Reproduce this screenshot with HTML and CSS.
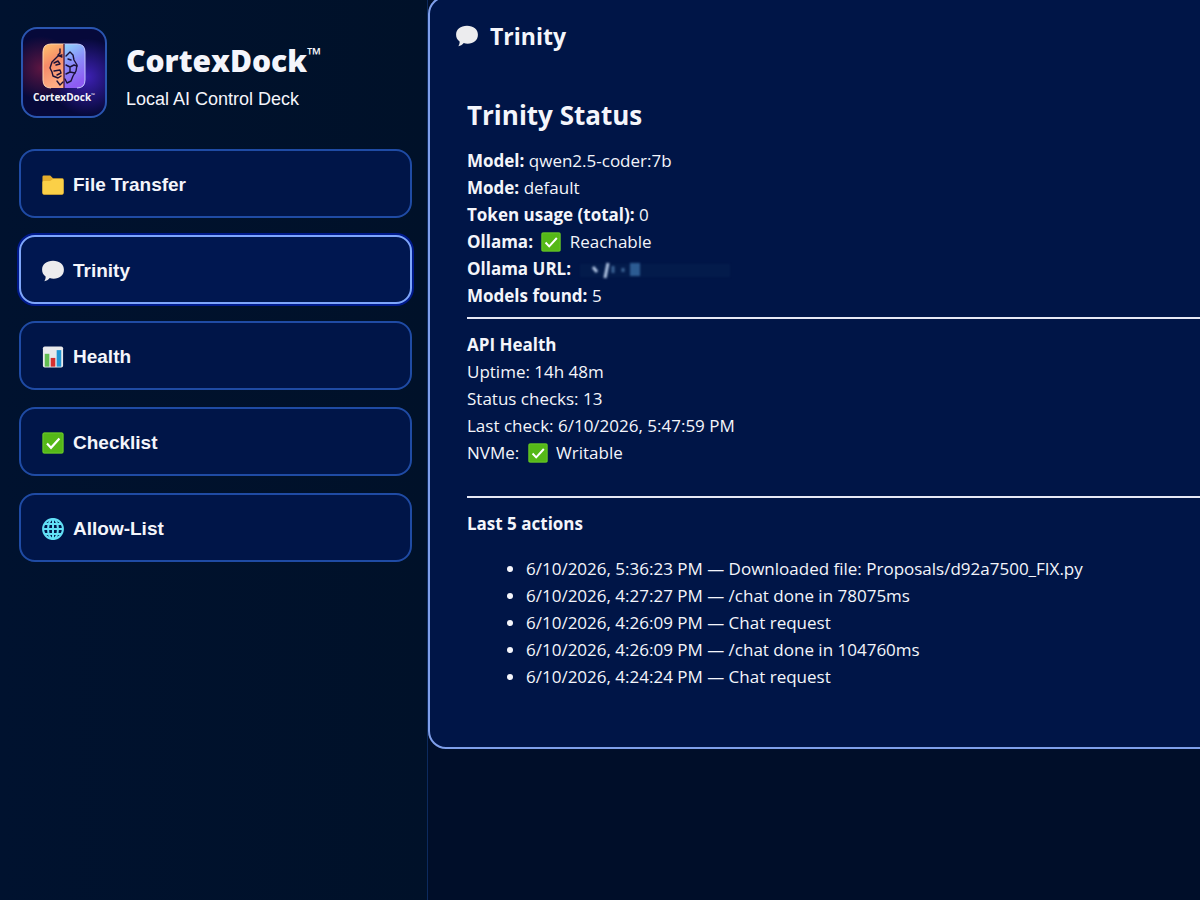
FILE: index.html
```html
<!DOCTYPE html>
<html lang="en">
<head>
  <meta charset="UTF-8">
  <meta name="viewport" content="width=device-width, initial-scale=1.0">
  <title>CortexDock - Trinity</title>
  <link rel="stylesheet" href="styles.css">
</head>
<body>
  <!-- shared icons -->
  <svg class="defs" width="0" height="0" aria-hidden="true">
    <symbol id="icon-check" viewBox="0 0 22 22">
      <rect x="0.5" y="0.5" width="21" height="21" rx="1.5" fill="#55b818"/>
      <rect x="1" y="1" width="20" height="20" rx="1.5" fill="none" stroke="#6fcf2e" stroke-width="0.8"/>
      <path d="M5 11.6 L9 15.8 L17.4 6.6" fill="none" stroke="#fff" stroke-width="2.2"/>
    </symbol>
    <symbol id="icon-chat" viewBox="0 0 22 20">
      <path d="M11 0.5 C17 0.5 21 3.8 21 8.8 C21 13.8 17 17 11.6 17 C10.2 17 9 16.8 8 16.5 C6.6 18.200 5 19.2 3 19.4 C3.900 18 4.400 16.500 4.200 15 C2 13.400 1 11.400 1 8.800 C1 3.800 5 0.500 11 0.500 Z" fill="#ececee"/>
    </symbol>
  </svg>

  <div class="app">
    <aside class="sidebar">
      <header class="brand">
        <div class="logo">
          <svg class="logo-mark" viewBox="0 0 44 46" aria-hidden="true">
            <defs>
              <linearGradient id="warm" x1="0" y1="0" x2="0.3" y2="1">
                <stop offset="0" stop-color="#ffc46e"/>
                <stop offset="0.5" stop-color="#f58a68"/>
                <stop offset="1" stop-color="#ffad83"/>
              </linearGradient>
              <linearGradient id="cool" x1="0" y1="0" x2="0.3" y2="1">
                <stop offset="0" stop-color="#8fd8fa"/>
                <stop offset="0.5" stop-color="#8b8dfa"/>
                <stop offset="1" stop-color="#8e5cf2"/>
              </linearGradient>
            </defs>
            <path d="M22 1 H9 Q1 1 1 9 V37 Q1 45 9 45 H22 Z" fill="url(#warm)"/>
            <path d="M22 1 H35 Q43 1 43 9 V37 Q43 45 35 45 H22 Z" fill="url(#cool)"/>
            <path d="M22 1 H9 Q1 1 1 9 V37 Q1 45 9 45" fill="none" stroke="#ffd6b0" stroke-width="1"/>
            <path d="M22 1 H35 Q43 1 43 9 V37 Q43 45 35 45" fill="none" stroke="#c6c8ff" stroke-width="1"/>
            <g fill="none" stroke="#1b1238" stroke-width="1.4" stroke-linecap="round" stroke-linejoin="round">
              <path d="M20 12 L16 13 L13 16 L10 19 L8 25 L10 29 L11 33 L16 35 L19 33"/>
              <path d="M18 6 V10 L16 12 L20 14 M12 20 L16 18 L18 21 L14 22 M12 28 L18 27 L19 30 L15 32 M15 38 L18 42 L21 39"/>
              <path d="M24 13 L28 9 L31 12 L32 17 L35 22 L34 28 L31 33 L29 38 L25 40 L23 36"/>
              <path d="M24 22 L28 24 L32 22 L35 23 M28 24 L28 29 L24 31 M28 29 L33 30 M26 16 L29 17"/>
            </g>
            <path d="M22 1 V45" stroke="#3a0b31" stroke-width="1.2"/>
          </svg>
          <span class="logo-text">CortexDock<sup>™</sup></span>
        </div>
        <div class="brand-text">
          <h1>CortexDock<sup>™</sup></h1>
          <p>Local AI Control Deck</p>
        </div>
      </header>

      <nav class="menu">
        <button type="button" class="menu-item">
          <svg class="menu-icon" viewBox="0 0 24 24" aria-hidden="true">
            <path d="M0.5 3 Q0.5 1.500 2 1.500 H9 L12 4.500 H22 Q23.500 4.500 23.500 6 V21 Q23.500 22.500 22 22.500 H2 Q0.500 22.500 0.500 21 Z" fill="#e5ae2c"/>
            <path d="M0.5 9 Q0.5 7.500 2 7.500 H9 L12 5.500 H22 Q23.500 5.500 23.500 7 V20.500 Q23.500 22 22 22 H2 Q0.500 22 0.500 20.500 Z" fill="#fbd047"/>
          </svg>
          <span>File Transfer</span>
        </button>
        <button type="button" class="menu-item active">
          <svg class="menu-icon" aria-hidden="true"><use href="#icon-chat"/></svg>
          <span>Trinity</span>
        </button>
        <button type="button" class="menu-item">
          <svg class="menu-icon" viewBox="0 0 24 24" aria-hidden="true">
            <rect x="1" y="0.5" width="22" height="23" rx="2" fill="#e9eaec"/>
            <rect x="3" y="8.5" width="5" height="14" fill="#62bd52"/>
            <rect x="9.5" y="13" width="5" height="9.5" fill="#d62f2f"/>
            <rect x="16" y="4.5" width="5" height="18" fill="#2397d4"/>
          </svg>
          <span>Health</span>
        </button>
        <button type="button" class="menu-item">
          <svg class="menu-icon" aria-hidden="true"><use href="#icon-check"/></svg>
          <span>Checklist</span>
        </button>
        <button type="button" class="menu-item">
          <svg class="menu-icon" viewBox="0 0 24 24" fill="none" stroke="#62dff5" stroke-width="2.2" aria-hidden="true">
            <circle cx="12" cy="12" r="10.8"/>
            <ellipse cx="12" cy="12" rx="5.4" ry="10.8"/>
            <path d="M12 1.4 V22.6 M1.4 12 H22.6 M3.2 6.6 H20.8 M3.2 17.4 H20.8"/>
          </svg>
          <span>Allow-List</span>
        </button>
      </nav>
    </aside>

    <main class="content">
      <section class="panel">
        <h2 class="panel-title">
          <svg class="title-icon" aria-hidden="true"><use href="#icon-chat"/></svg>
          Trinity
        </h2>

        <div class="status">
          <h3>Trinity Status</h3>
          <div><b>Model:</b> qwen2.5-coder:7b</div>
          <div><b>Mode:</b> default</div>
          <div><b>Token usage (total):</b> 0</div>
          <div><b>Ollama:</b> <svg class="check" aria-hidden="true"><use href="#icon-check"/></svg> Reachable</div>
          <div><b>Ollama URL:</b>
            <svg class="redacted" viewBox="0 0 180 22" role="img" aria-label="hidden">
              <rect x="4" y="5" width="150" height="13" fill="#05214f" opacity="0.5"/>
              <path d="M17 8 L21 13 M32 4 L29 19" stroke="#b4c8e6" stroke-width="3"/>
              <path d="M37 7 V14 M47 9 V13" stroke="#3d6597" stroke-width="3"/>
              <rect x="54" y="4" width="10" height="13" fill="#2c5b92"/>
            </svg>
          </div>
          <div><b>Models found:</b> 5</div>
          <hr>
          <div><b>API Health</b></div>
          <div>Uptime: 14h 48m</div>
          <div>Status checks: 13</div>
          <div>Last check: 6/10/2026, 5:47:59 PM</div>
          <div>NVMe: <svg class="check" aria-hidden="true"><use href="#icon-check"/></svg> Writable</div>
          <hr class="spaced">
          <div><b>Last 5 actions</b></div>
          <ul>
            <li>6/10/2026, 5:36:23 PM — Downloaded file: Proposals/d92a7500_FIX.py</li>
            <li>6/10/2026, 4:27:27 PM — /chat done in 78075ms</li>
            <li>6/10/2026, 4:26:09 PM — Chat request</li>
            <li>6/10/2026, 4:26:09 PM — /chat done in 104760ms</li>
            <li>6/10/2026, 4:24:24 PM — Chat request</li>
          </ul>
        </div>
      </section>
    </main>
  </div>
</body>
</html>
```
FILE: styles.css
```css
* {
  box-sizing: border-box;
}
body {
  margin: 0;
  background-color: #000e29;
  color: #f4f5fb;
  font-family: "Open Sans", "Noto Sans", sans-serif;
  font-size: 17px;
  line-height: 27px;
}
.defs {
  position: absolute;
}
.app {
  display: flex;
  min-height: 100vh;
  overflow: hidden;
}

/* Sidebar */
.sidebar {
  flex: 0 0 428px;
  padding: 27px 15px 27px 19px;
  background: linear-gradient(90deg, #00122f, #001129);
  border-right: 1px solid #0c2a5e;
  font-family: "Liberation Sans", Arial, sans-serif;
}
.brand {
  display: flex;
  align-items: center;
  gap: 19px;
  padding-left: 2px;
  margin-bottom: 31px;
}
.logo {
  display: flex;
  flex-direction: column;
  align-items: center;
  width: 86px;
  height: 91px;
  padding-top: 14px;
  border: 2px solid #2a55b0;
  border-radius: 16px;
  background: radial-gradient(circle at 22% 45%, rgba(150, 30, 70, 0.6), transparent 40%),
    radial-gradient(circle at 78% 55%, rgba(80, 40, 220, 0.75), transparent 48%),
    #06093a;
}
.logo-mark {
  width: 44px;
  height: 46px;
}
.logo-text {
  font-family: "Open Sans", sans-serif;
  font-size: 10px;
  font-weight: bold;
  line-height: 16px;
  white-space: nowrap;
}
.logo-text sup {
  font-size: 5px;
  line-height: 0;
}
.brand-text {
  padding-top: 4px;
}
.brand-text h1 {
  margin: 0;
  font-family: "Open Sans", "Noto Sans", sans-serif;
  font-size: 30px;
  font-weight: 800;
  line-height: 44px;
}
.brand-text h1 sup {
  font-size: 18px;
  font-weight: bold;
  line-height: 0;
}
.brand-text p {
  margin: 4px 0 0;
  font-size: 18px;
  line-height: 24px;
}
.menu {
  display: flex;
  flex-direction: column;
  gap: 17px;
}
.menu-item {
  display: flex;
  align-items: center;
  gap: 8px;
  height: 69px;
  padding: 3px 20px 0;
  border: 2px solid #1f4ba4;
  border-radius: 16px;
  background: #001548;
  color: #f4f5fb;
  font-family: inherit;
  font-size: 19px;
  font-weight: bold;
  text-align: left;
  cursor: pointer;
}
.menu-item:hover {
  background: #001a55;
}
.menu-item.active {
  border-color: #7ea6fa;
  background: #001750;
  box-shadow: 0 0 0 2px #001a8c;
}
.menu-icon {
  width: 24px;
  height: 22px;
}

/* Main panel */
.content {
  flex: 1;
  min-width: 0;
}
.panel {
  margin: -4px -20px 0 0;
  padding: 20px 0 57px 25px;
  border: 2px solid #7f9fea;
  border-radius: 18px;
  background: #001547;
}
.panel-title {
  display: flex;
  align-items: center;
  gap: 11px;
  margin: 0;
  font-size: 23px;
  font-weight: bold;
  line-height: 36px;
}
.title-icon {
  width: 24px;
  height: 22px;
}
.status {
  margin: 41px 0 0 12px;
}
.status h3 {
  margin: 0 0 12px;
  font-size: 26px;
  font-weight: bold;
  line-height: 40px;
}
.status hr {
  height: 2px;
  margin: 8px 0 12px;
  border: none;
  background: #e6e8f5;
}
.status hr.spaced {
  margin-top: 30px;
}
.status ul {
  margin: 18px 0 0;
  padding-left: 59px;
}
.check {
  width: 20px;
  height: 20px;
  margin: 0 4px;
  vertical-align: -4px;
}
.redacted {
  width: 180px;
  height: 22px;
  vertical-align: middle;
  filter: blur(1px);
}
```
